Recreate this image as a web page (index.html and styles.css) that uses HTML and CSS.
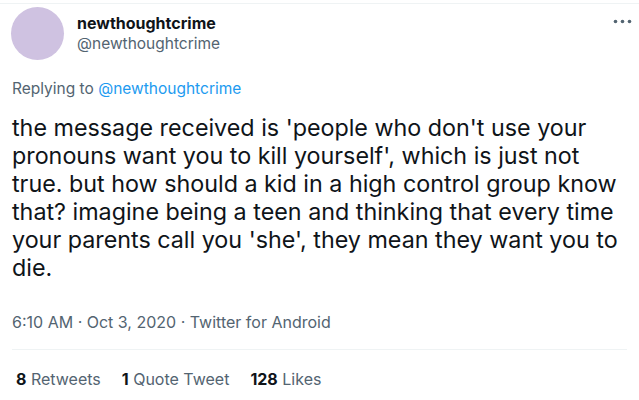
FILE: index.html
```html
<!DOCTYPE html>
<html>
<head>
<meta charset="utf-8">
<link rel="stylesheet" href="styles.css">
</head>
<body>
<div class="tweet">
  <div class="topline"></div>
  <div class="header">
    <div class="avatar"></div>
    <div class="names">
      <div class="name">newthoughtcrime</div>
      <div class="handle">@newthoughtcrime</div>
    </div>
    <div class="more">
      <svg width="19" height="5" viewBox="0 0 19 5"><circle cx="2.5" cy="2.5" r="1.8" fill="#536471"/><circle cx="9.5" cy="2.5" r="1.8" fill="#536471"/><circle cx="16.5" cy="2.5" r="1.8" fill="#536471"/></svg>
    </div>
  </div>
  <div class="reply">Replying to <span class="link">@newthoughtcrime</span></div>
  <div class="text">the message received is 'people who don't use your pronouns want you to kill yourself', which is just not true. but how should a kid in a high control group know that? imagine being a teen and thinking that every time your parents call you 'she', they mean they want you to die.</div>
  <div class="meta">6:10 AM · Oct 3, 2020 · Twitter for Android</div>
  <div class="sep"></div>
  <div class="stats">
    <span class="stat"><b>8</b> Retweets</span>
    <span class="stat"><b>1</b> Quote Tweet</span>
    <span class="stat"><b>128</b> Likes</span>
  </div>
</div>
</body>
</html>
```
FILE: styles.css
```css
html, body {
  margin: 0;
  padding: 0;
  background: #ffffff;
}
body {
  font-family: Inter, "Liberation Sans", sans-serif;
  color: #0f1419;
  width: 639px;
  height: 400px;
  overflow: hidden;
}
.tweet {
  padding: 3px 0 0 0;
}
.topline {
  height: 1px;
  background: #eff3f4;
}
.header {
  display: flex;
  align-items: flex-start;
  padding: 3px 7px 0 11px;
}
.avatar {
  width: 53px;
  height: 53px;
  border-radius: 50%;
  background: #cfc2e1;
  flex: none;
}
.names {
  margin-left: 13px;
  padding-top: 6px;
}
.name {
  font-weight: 700;
  font-size: 16px;
  line-height: 20px;
  color: #0f1419;
}
.handle {
  font-size: 15.5px;
  line-height: 20px;
  color: #536471;
  margin-top: 1px;
}
.more {
  margin-left: auto;
  padding-top: 12px;
}
.more svg {
  display: block;
}
.reply {
  margin: 19px 0 0 12px;
  font-size: 15.5px;
  line-height: 20px;
  color: #536471;
}
.link {
  color: #1d9bf0;
}
.text {
  margin: 15px 10px 0 12px;
  font-size: 23.3px;
  line-height: 28px;
  color: #0f1419;
}
.meta {
  margin: 30px 0 0 12px;
  font-size: 16px;
  line-height: 20px;
  color: #536471;
}
.sep {
  margin: 17px 12px 0 12px;
  height: 1px;
  background: #eff3f4;
}
.stats {
  display: flex;
  gap: 21px;
  margin: 19px 0 0 16px;
  font-size: 16px;
  line-height: 20px;
  color: #536471;
}
.stat b {
  color: #0f1419;
  font-weight: 700;
}
```
